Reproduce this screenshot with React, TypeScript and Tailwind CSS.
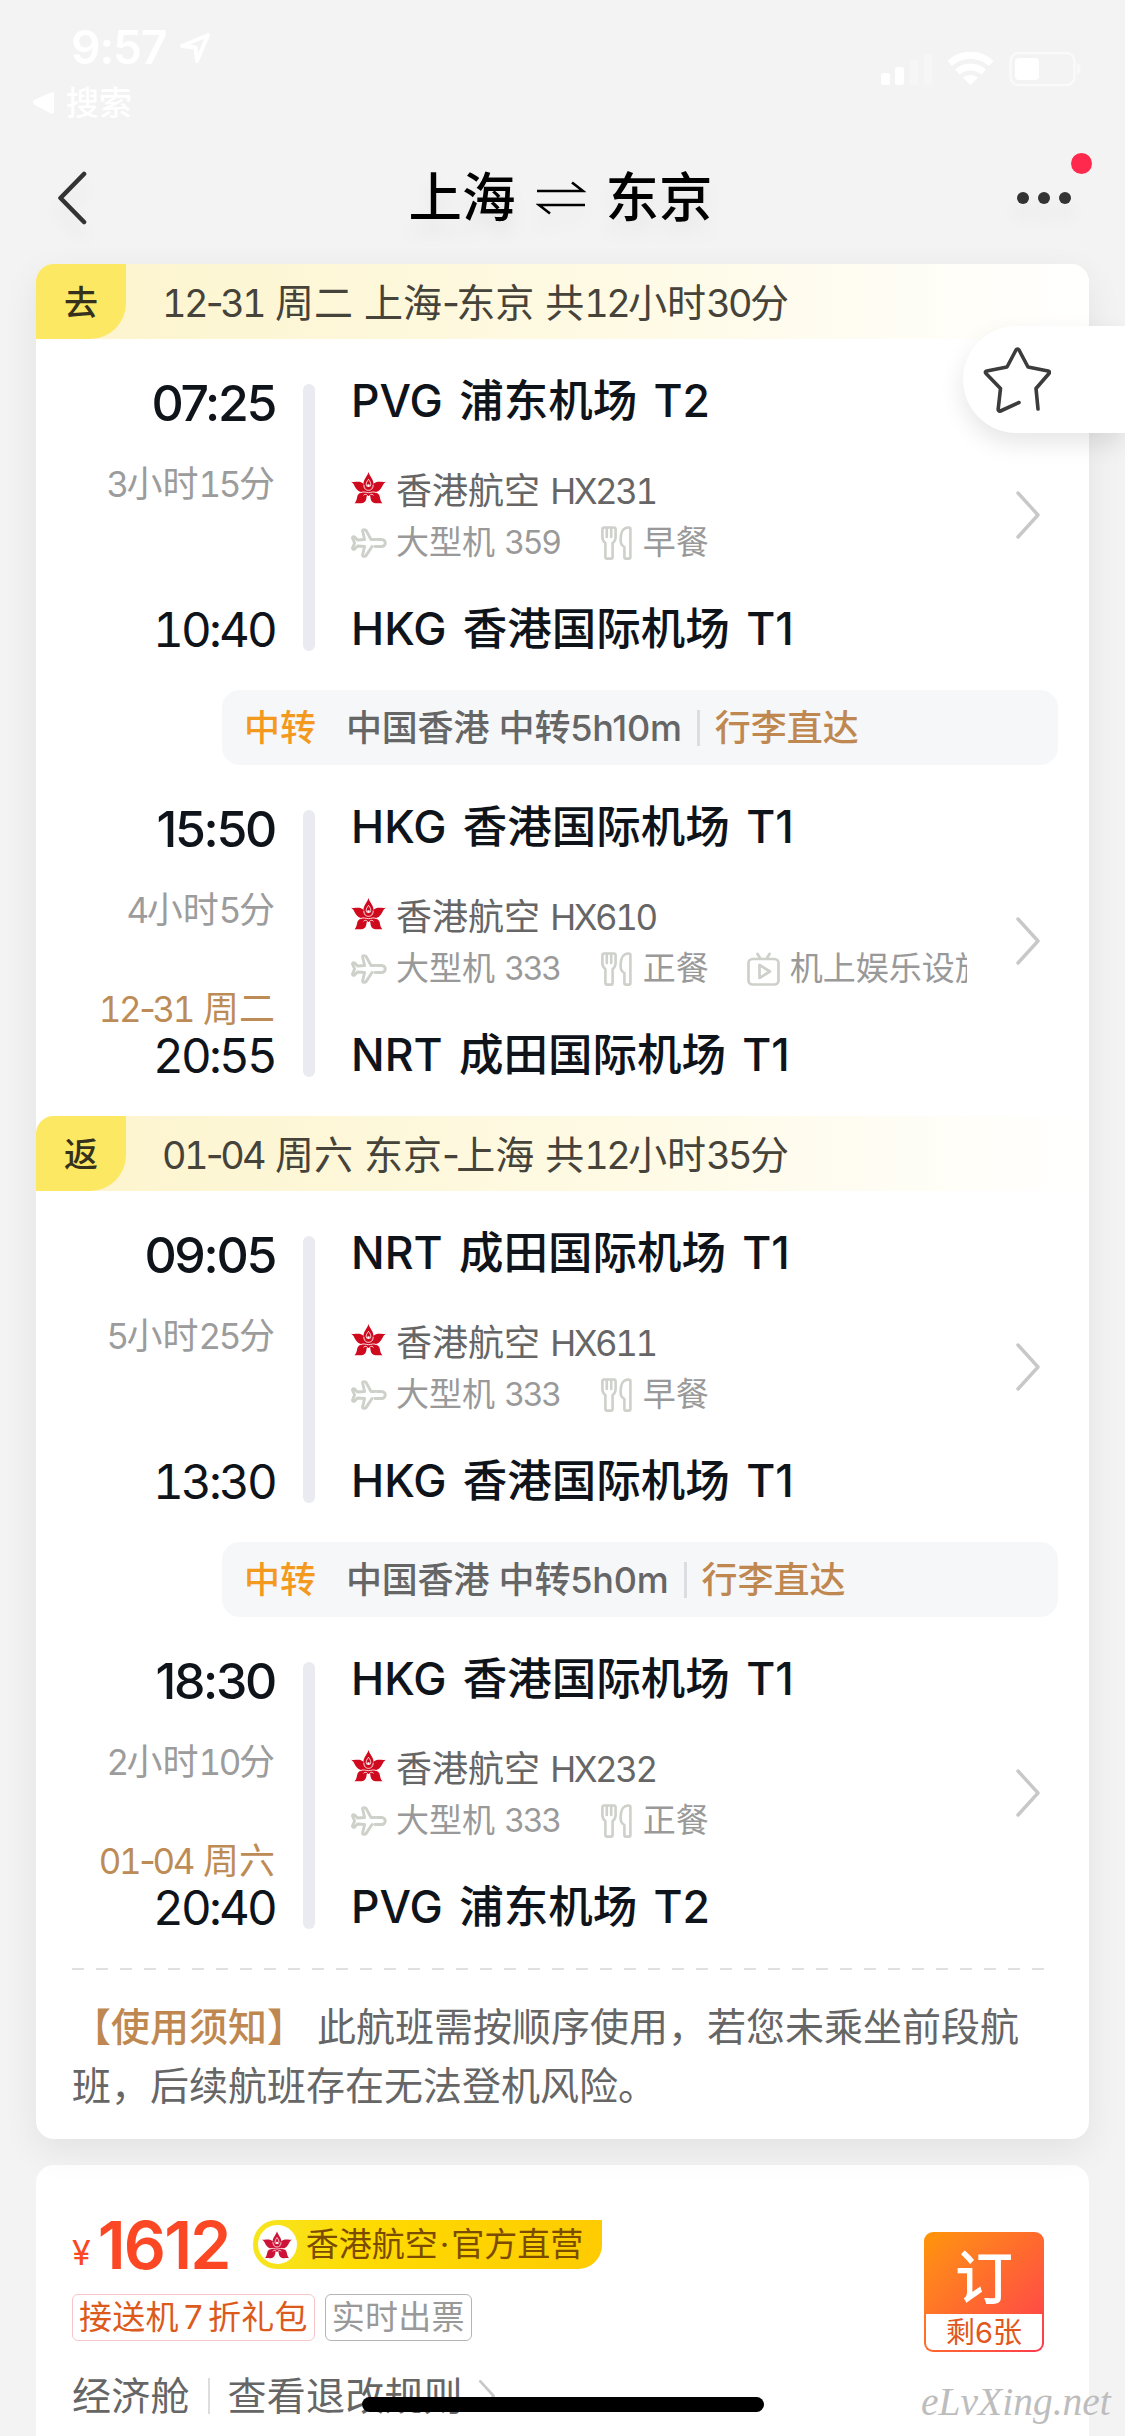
import type { ReactNode } from 'react';

interface Leg {
  departTime: string;
  departPlace: string;
  duration: string;
  flight: string;
  plane: string;
  meal: string;
  extra?: string;
  arriveDate?: string;
  arriveTime: string;
  arrivePlace: string;
}

interface Trip {
  tag: string;
  title: string;
  transfer: string;
  legs: [Leg, Leg];
}

const trips: Trip[] = [
  {
    tag: '去',
    title: '12-31 周二 上海-东京 共12小时30分',
    transfer: '中国香港 中转5h10m',
    legs: [
      {
        departTime: '07:25',
        departPlace: 'PVG 浦东机场 T2',
        duration: '3小时15分',
        flight: '香港航空 HX231',
        plane: '大型机 359',
        meal: '早餐',
        arriveTime: '10:40',
        arrivePlace: 'HKG 香港国际机场 T1',
      },
      {
        departTime: '15:50',
        departPlace: 'HKG 香港国际机场 T1',
        duration: '4小时5分',
        flight: '香港航空 HX610',
        plane: '大型机 333',
        meal: '正餐',
        extra: '机上娱乐设施',
        arriveDate: '12-31 周二',
        arriveTime: '20:55',
        arrivePlace: 'NRT 成田国际机场 T1',
      },
    ],
  },
  {
    tag: '返',
    title: '01-04 周六 东京-上海 共12小时35分',
    transfer: '中国香港 中转5h0m',
    legs: [
      {
        departTime: '09:05',
        departPlace: 'NRT 成田国际机场 T1',
        duration: '5小时25分',
        flight: '香港航空 HX611',
        plane: '大型机 333',
        meal: '早餐',
        arriveTime: '13:30',
        arrivePlace: 'HKG 香港国际机场 T1',
      },
      {
        departTime: '18:30',
        departPlace: 'HKG 香港国际机场 T1',
        duration: '2小时10分',
        flight: '香港航空 HX232',
        plane: '大型机 333',
        meal: '正餐',
        arriveDate: '01-04 周六',
        arriveTime: '20:40',
        arrivePlace: 'PVG 浦东机场 T2',
      },
    ],
  },
];

// Latin runs and hyphens are set tighter than the Chinese characters around them
function Mixed({ text }: { text?: string }) {
  if (!text) return null;
  return (
    <>
      {text.split(/([A-Za-z0-9]+|-)/).map((part, i) =>
        i % 2 ? (
          <span key={i} className={part === '-' ? 'tracking-[-0.09em]' : 'text-[0.97em] tracking-[-0.07em] tabular-nums'}>
            {part}
          </span>
        ) : (
          part
        ),
      )}
    </>
  );
}

function AirlineLogo({ className, color = '#cf0a1f' }: { className: string; color?: string }) {
  return (
    <svg viewBox="0 0 104 96" className={className}>
      <g fill={color}>
        <path d="M52 0C56 14 67 22 67 35C67 44 62 48 52 52C42 48 37 44 37 35C37 22 48 14 52 0Z" />
        <path d="M0 29C14 32 26 24 38 36C43 44 43 52 47 60C36 62 24 60 18 53C10 45 10 36 0 29Z" />
        <path d="M104 29C90 32 78 24 66 36C61 44 61 52 57 60C68 62 80 60 86 53C94 45 94 36 104 29Z" />
        <path d="M48 62C38 58 25 61 20 69C16 78 18 86 10 94C20 92 26 96 37 92C47 88 46 74 48 62Z" />
        <path d="M56 62C66 58 79 61 84 69C88 78 86 86 94 94C84 92 78 96 67 92C57 88 58 74 56 62Z" />
        <path d="M34 48H70L64 72H40Z" />
      </g>
      <g fill="none" stroke="#fff" strokeWidth="2.600">
        <path d="M52 22C45 31 43 38 48 44M52 22C59 31 61 38 56 44" />
        <path d="M38 38C38 50 44 55 52 55S66 50 66 38" />
        <path d="M28 62C37 57 44 62 52 62S67 57 76 62" />
        <path d="M37 70C43 64 48 68 52 74C56 68 61 64 67 70" />
      </g>
      <circle cx="52" cy="41" r="4" fill="#fff" />
    </svg>
  );
}

function PlaneIcon() {
  return (
    <svg viewBox="0 0 36 30" className="h-[30px] w-9 shrink-0" fill="none" stroke="#cdd1ca" strokeWidth="2.900" strokeLinejoin="round" strokeLinecap="round">
      <path d="M24 11.500H20L15.200 2.600C14.600 1.600 11.400 1.200 11.600 3L13.600 11.500L6.500 12L3.600 9C2.600 8.200 1.200 9 1.600 10.200L3.600 15L1.600 19.800C1.200 21 2.600 21.800 3.600 21L6.500 18L13.600 18.500L11.600 27C11.400 28.800 14.600 28.400 15.200 27.400L21 18.500M24 18.500H30.500C35.500 18.500 35.500 11.500 30.500 11.500H26" />
    </svg>
  );
}

function MealIcon() {
  return (
    <svg viewBox="0 0 31 34" className="h-[34px] w-[31px] shrink-0" fill="none" stroke="#cdd1ca" strokeWidth="2.600" strokeLinejoin="round" strokeLinecap="round">
      <path d="M3.200 1.500H12.800C14 1.500 14.600 2.200 14.600 3.400V11C14.600 14 13.600 15.600 11.600 17V31C11.600 32 11 32.600 10 32.600H6.200C5.200 32.600 4.400 32 4.400 31V17C2.400 15.600 1.400 14 1.400 11V3.400C1.400 2.200 2 1.500 3.200 1.500Z" />
      <path d="M5.800 2V11M10.200 2V11" />
      <path d="M29.400 3V31C29.400 32 28.800 32.600 27.800 32.600H25C24 32.600 23.400 32 23.400 31V21C20 19 19.600 17 19.600 13C19.600 7 22 1.500 27.400 1.500C28.600 1.500 29.400 2 29.400 3Z" />
    </svg>
  );
}

function TvIcon() {
  return (
    <svg viewBox="0 0 33 34" className="h-[34px] w-[33px] shrink-0" fill="none" stroke="#cdd1ca" strokeWidth="2.700" strokeLinejoin="round" strokeLinecap="round">
      <rect x="1.500" y="7" width="30" height="25.500" rx="4" />
      <path d="M10.500 2L13 6M22.500 2L20 6M12.500 13V26L23 19.500Z" />
    </svg>
  );
}

function Chevron({ className, width = 3.4 }: { className: string; width?: number }) {
  return (
    <svg viewBox="0 0 24 48" className={className} fill="none" stroke="#c8c8c8" strokeWidth={width} strokeLinecap="round" strokeLinejoin="round">
      <path d="M2 2L22 24L2 46" />
    </svg>
  );
}

function StatusBar() {
  return (
    <div className="flex h-[134px] justify-between text-white">
      <div className="pt-[25px]">
        <div className="flex items-center pl-[71px]">
          <span className="text-[46px] leading-[45px] font-semibold tracking-[-1px]">9:57</span>
          <svg viewBox="0 0 32 32" className="ml-[12px] h-8 w-8" fill="none" stroke="#fff" strokeWidth="4" strokeLinejoin="round">
            <path d="M29 3L18 29L16.500 15.500L3 14Z" />
          </svg>
        </div>
        <div className="mt-[14px] flex items-center pl-[33px]">
          <svg viewBox="0 0 21 22" className="h-[22px] w-[21px]" fill="#fff">
            <path d="M0 10C0 9 1 8 2 7.500L18 .5C20 0 21 .5 21 2V20C21 21.500 20 22 18 21.500L2 13C1 12.500 0 11 0 10Z" />
          </svg>
          <span className="ml-3 text-[33px] leading-[38px] font-medium">搜索</span>
        </div>
      </div>
      <svg viewBox="0 0 205 36" className="mt-[51px] mr-10 h-9 w-[205px]">
        <g fill="#fff">
          <rect x="1" y="22" width="9" height="12" rx="2.500" />
          <rect x="15" y="16" width="9" height="18" rx="2.500" />
          <g opacity=".3">
            <rect x="29.500" y="9" width="9" height="25" rx="2.500" />
            <rect x="43.500" y="3" width="9" height="31" rx="2.500" />
          </g>
          <path d="M67.500 10C79 -2.500 102 -2.500 113.500 10L109 15C99 5.500 82 5.500 72 15Z" />
          <path d="M75 18.500C83.500 10.500 97.500 10.500 106 18.500L101.500 23.500C95 18 86 18 79.500 23.500Z" />
          <path d="M83 26.500C87.500 23 93.500 23 98 26.500L90.500 34Z" />
          <rect x="135" y="7" width="24" height="22" rx="4" />
          <path d="M197 12C202 14 202 22 197 24Z" opacity=".5" />
        </g>
        <rect x="130.500" y="2" width="64" height="32" rx="8" fill="none" stroke="#fff" strokeWidth="2.500" opacity=".55" />
      </svg>
    </div>
  );
}

function NavBar() {
  return (
    <header className="flex h-[129px] items-center justify-between pr-[54px] pb-[1px] pl-[57px]">
      <svg viewBox="0 0 30 54" className="h-[54px] w-[30px] drop-shadow-[0_14px_8px_rgba(0,0,0,0.05)]" fill="none" stroke="#333" strokeWidth="4.600" strokeLinecap="round" strokeLinejoin="round">
        <path d="M27 3L3.500 27L27 51" />
      </svg>
      <h1 className="ml-[17px] flex items-center text-[53.5px] leading-[60px] font-medium text-black drop-shadow-[0_14px_8px_rgba(0,0,0,0.05)]">
        <span>上海</span>
        <svg viewBox="0 0 50 34" className="mx-5 h-[34px] w-[50px]" fill="none" stroke="#000" strokeWidth="2.600">
          <path d="M1 10H47L36 1.500M49 24H3L14 32.500" />
        </svg>
        <span>东京</span>
      </h1>
      <div className="relative">
        <svg viewBox="0 0 54 12" className="h-3 w-[54px] drop-shadow-[0_14px_8px_rgba(0,0,0,0.05)]" fill="#333">
          <circle cx="6" cy="6" r="6" />
          <circle cx="27" cy="6" r="6" />
          <circle cx="48" cy="6" r="6" />
        </svg>
        <span className="absolute -top-[39px] left-[54px] h-[21px] w-[21px] rounded-full bg-[#fe294d]" />
      </div>
    </header>
  );
}

function Amenity({ icon, children, gap }: { icon: ReactNode; children: ReactNode; gap: string }) {
  return (
    <span className={'flex shrink-0 items-center whitespace-nowrap ' + gap}>
      {icon}
      <span>{children}</span>
    </span>
  );
}

function LegRow({ leg }: { leg: Leg }) {
  return (
    <div className="mt-[45px] mb-[39px] flex h-[267px]">
      <div className="flex w-[239px] flex-col text-right text-[36px]">
        <div className="h-[38px] text-[50px] leading-[38px] font-medium tracking-[-2.3px] text-[#0f131a]">{leg.departTime}</div>
        <div className="mt-[37px] h-[50px] leading-[51px] text-[#9c9c9c]">
          <Mixed text={leg.duration} />
        </div>
        <div className="mt-auto h-12 leading-[48px] text-[#bd8c56]">
          <Mixed text={leg.arriveDate} />
        </div>
        <div className="h-11 text-[47.5px] leading-[45px] tracking-[-2.8px] text-[#0f131a] tabular-nums">{leg.arriveTime}</div>
      </div>
      <div className="ml-7 w-3 rounded-full bg-[#e9ebf1]" />
      <div className="ml-9 flex flex-1 flex-col text-[44.5px] font-medium text-[#0f131a]">
        <div className="h-[33px] leading-[35px] [word-spacing:4.5px]">{leg.departPlace}</div>
        <div className="mt-[49px] flex h-[102px] items-center justify-between pr-[49px] font-normal">
          <div className="w-[616px] overflow-hidden">
            <div className="flex h-[51px] items-center gap-[10px] text-[36px] text-[#666]">
              <AirlineLogo className="-mt-2 h-8 w-[35px]" />
              <span className="-mt-[2px]">
                <Mixed text={leg.flight} />
              </span>
            </div>
            <div className="flex h-[51px] items-center text-[33px] text-[#999]">
              <Amenity icon={<PlaneIcon />} gap="gap-[9px]">
                <Mixed text={leg.plane} />
              </Amenity>
              <span className="w-[41px] shrink-0" />
              <Amenity icon={<MealIcon />} gap="gap-[11px]">{leg.meal}</Amenity>
              {leg.extra && (
                <>
                  <span className="w-[38px] shrink-0" />
                  <Amenity icon={<TvIcon />} gap="gap-[10px]">{leg.extra}</Amenity>
                </>
              )}
            </div>
          </div>
          <Chevron className="-mt-1 h-12 w-6" />
        </div>
        <div className="mt-auto h-11 leading-[45px] [word-spacing:4.5px]">{leg.arrivePlace}</div>
      </div>
    </div>
  );
}

function Transfer({ text }: { text: string }) {
  return (
    <div className="mr-[31px] ml-[186px] flex h-[75px] items-center rounded-[18px] bg-[#f6f7f9] pl-[22px] text-[36px] font-medium">
      <span className="text-[#f39a1e]">中转</span>
      <span className="ml-[30px] tracking-[-0.2px] text-[#666]">{text}</span>
      <span className="ml-[15px] h-9 w-[3px] bg-[#dcdde0]" />
      <span className="ml-[15px] text-[#bf8850]">行李直达</span>
    </div>
  );
}

function TripSection({ trip }: { trip: Trip }) {
  return (
    <section>
      <div className="flex h-[75px] items-center rounded-t-[18px] bg-gradient-to-r from-[#fdf4cc] via-[#fefae4] via-55% to-white">
        <span className="flex h-full w-[90px] items-center justify-center rounded-tl-[18px] rounded-br-[36px] bg-[#fce863] pt-[2px] text-[34px] font-medium text-[#35311c]">
          {trip.tag}
        </span>
        <span className="mt-[2px] ml-9 text-[39px] leading-none text-[#45433a]">
          <Mixed text={trip.title} />
        </span>
      </div>
      <LegRow leg={trip.legs[0]} />
      <Transfer text={trip.transfer} />
      <LegRow leg={trip.legs[1]} />
    </section>
  );
}

function FareCard() {
  return (
    <div className="mt-[26px] flex h-[300px] justify-between rounded-t-[18px] bg-white pr-[45px] pl-9">
      <div>
        <div className="mt-[55px] flex h-[49px] items-center">
          <span className="mt-4 text-[34px] leading-none text-[#fb4724]">¥</span>
          <span className="ml-[7px] text-[66px] leading-none font-semibold tracking-[-1.8px] text-[#fb4724]">1612</span>
          <span className="ml-[23px] flex h-[49px] items-center rounded-l-[24px] rounded-br-[24px] bg-gradient-to-r from-[#f6e51e] via-[#fedb00] via-30% to-[#fecb00] pr-[19px] pl-[5px] text-[33px] text-[#7b4c00]">
            <span className="flex h-[39px] w-[39px] items-center justify-center rounded-full bg-white">
              <AirlineLogo className="h-7 w-[30px]" color="#cd1438" />
            </span>
            <span className="ml-[9px] whitespace-nowrap">
              香港航空<span className="mx-[2px]">·</span>官方直营
            </span>
          </span>
        </div>
        <div className="mt-[25px] flex gap-[10px] text-[33px]">
          <span className="flex h-[47px] items-center rounded-[6px] border border-[#f8c6c9] px-[6px] tracking-[0.3px] text-[#dc5a1c]">
            接送机<span className="mx-[5px]">7</span>折礼包
          </span>
          <span className="flex h-[47px] items-center rounded-[6px] border border-[#b5b5b5] px-[6px] tracking-[0.2px] text-[#999]">实时出票</span>
        </div>
        <div className="mt-[35px] flex h-10 items-center text-[39px] tracking-[0.2px] text-[#666]">
          <span>经济舱</span>
          <span className="mx-[18px] h-9 w-[2px] bg-[#ddd]" />
          <span>查看退改规则</span>
          <Chevron className="ml-4 h-8 w-4" width={4} />
        </div>
      </div>
      <button className="mt-[67px] flex h-[120px] w-[120px] flex-col rounded-[9px] bg-gradient-to-br from-[#ff9500] via-[#ff692e] via-50% to-[#ff384d] p-[2px]">
        <span className="flex h-[80px] items-center justify-center self-center pt-2 text-[58px] leading-none font-medium text-white">订</span>
        <span className="flex h-9 w-full items-center justify-center rounded-b-[7px] bg-white pt-[2px] text-[29px] text-[#e2571b]">剩6张</span>
      </button>
    </div>
  );
}

export default function App() {
  return (
    <div className="relative h-[2436px] w-[1125px] overflow-hidden bg-[#f3f3f3] font-['Inter','Noto_Sans_CJK_SC',sans-serif]">
      <StatusBar />
      <NavBar />

      <main className="px-9 pt-[1px]">
        <div className="relative rounded-[18px] bg-white shadow-[0_12px_36px_rgba(0,0,0,0.07)]">
          {trips.map((trip) => (
            <TripSection key={trip.tag} trip={trip} />
          ))}
          <svg viewBox="0 0 972 2" className="ml-9 h-[2px] w-[972px]">
            <path d="M0 1H972" stroke="#e0e0e0" strokeWidth="2" strokeDasharray="12 12" />
          </svg>
          <p className="ml-9 h-[169px] w-[984px] pt-[27px] text-[39px] leading-[59px] text-[#666]">
            <span className="font-medium text-[#bf8850]">【使用须知】</span> 此航班需按顺序使用，若您未乘坐前段航班，后续航班存在无法登机风险。
          </p>
        </div>
        <FareCard />
      </main>

      {/* Floating favourite button */}
      <button className="absolute top-[326px] right-0 flex h-[107px] w-[162px] items-center rounded-l-full bg-white pl-[20px] shadow-[0_10px_24px_rgba(0,0,0,0.1)]">
        <svg viewBox="0 0 68 66" className="mt-[1px] h-[66px] w-[68px]" fill="none" stroke="#3c3c3c" strokeWidth="3.600" strokeLinecap="round" strokeLinejoin="round">
          <path d="M36 55.500L17.500 64C16 64.500 15 63.500 15.200 62L17.500 41.500L3 26.500C2 25.500 2.200 24.300 3.800 24L24 20L33 3C33.800 1.600 35.200 1.600 36 3L45 20L65 24C66.600 24.300 67 25.500 66 26.500L53 41.500L55 62" />
        </svg>
      </button>

      {/* Home indicator */}
      <div className="absolute top-[2397px] left-[362px] h-[15px] w-[402px] rounded-full bg-black" />
      <div className="absolute top-[2377px] left-[921px] font-['Liberation_Serif',serif] text-[39.5px] leading-[50px] whitespace-nowrap text-[#bdbdbd] italic">
        eLvXing.net
      </div>
    </div>
  );
}
